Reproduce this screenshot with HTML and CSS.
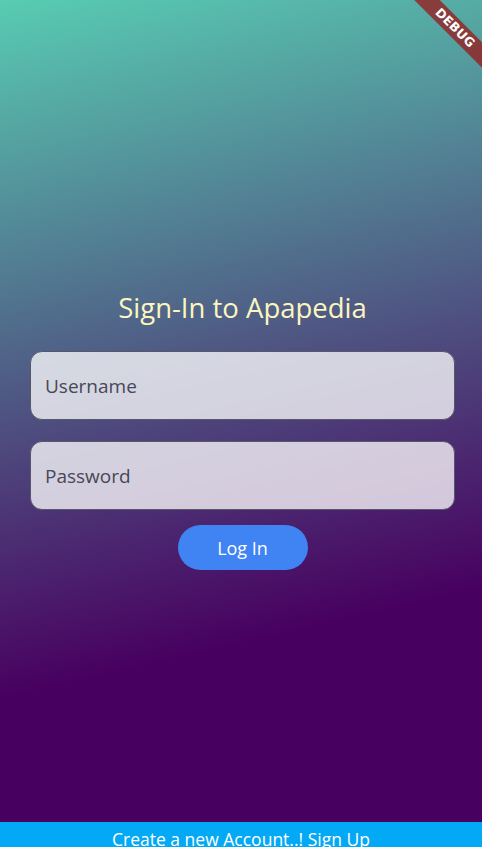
FILE: index.html
```html
<!DOCTYPE html>
<html>
<head>
<meta charset="utf-8">
<link rel="stylesheet" href="styles.css">
</head>
<body>
<div class="screen">
  <main class="main">
    <h1 class="title">Sign-In to Apapedia</h1>
    <div class="field"><span class="placeholder">Username</span></div>
    <div class="field field-second"><span class="placeholder">Password</span></div>
    <div class="actions"><button class="login">Log In</button></div>
  </main>
  <footer class="signup"><span class="signup-text">Create a new Account..! Sign Up</span></footer>
  <div class="debug"><span>DEBUG</span></div>
</div>
</body>
</html>
```
FILE: styles.css
```css
html, body {
  margin: 0;
  padding: 0;
}
body {
  width: 482px;
  height: 847px;
  overflow: hidden;
  font-family: "Open Sans", "Noto Sans", sans-serif;
}
.screen {
  position: relative;
  width: 482px;
  height: 847px;
  display: flex;
  flex-direction: column;
  background: linear-gradient(167deg, #58ccb2 0%, #480060 73%, #480060 100%);
  overflow: hidden;
}
.main {
  flex: 1;
  padding: 290px 27px 0 30px;
}
.title {
  margin: 0;
  font-weight: 400;
  font-size: 27.5px;
  line-height: 36px;
  color: #fdf5bf;
  text-align: center;
}
.field {
  box-sizing: border-box;
  margin-top: 25px;
  height: 69px;
  border: 1.5px solid #58576a;
  border-radius: 12px;
  background: rgba(255, 255, 255, 0.76);
  display: flex;
  align-items: center;
  padding-left: 14px;
}
.field-second {
  margin-top: 21px;
}
.placeholder {
  font-size: 19px;
  color: #484756;
}
.actions {
  display: flex;
  justify-content: center;
  margin-top: 15px;
}
.login {
  width: 130px;
  height: 45px;
  border: none;
  border-radius: 23px;
  background: #4083f2;
  color: #ffffff;
  font-family: "Open Sans", "Noto Sans", sans-serif;
  font-size: 18px;
  padding: 0;
}
.signup {
  height: 25px;
  background: #03a9f4;
  overflow: hidden;
  text-align: center;
}
.signup-text {
  display: block;
  padding-top: 5px;
  font-size: 17.5px;
  line-height: 24px;
  color: #ffffff;
}
.debug {
  position: absolute;
  top: 0;
  right: 0;
  width: 80px;
  height: 80px;
  overflow: hidden;
}
.debug span {
  position: absolute;
  top: 19px;
  left: -17px;
  width: 140px;
  height: 18px;
  line-height: 18px;
  transform: rotate(45deg);
  background: rgba(150, 30, 30, 0.78);
  color: #ffffff;
  font-family: "DejaVu Sans", sans-serif;
  font-weight: 700;
  font-size: 12.5px;
  text-align: center;
  letter-spacing: 0.2px;
}
```
